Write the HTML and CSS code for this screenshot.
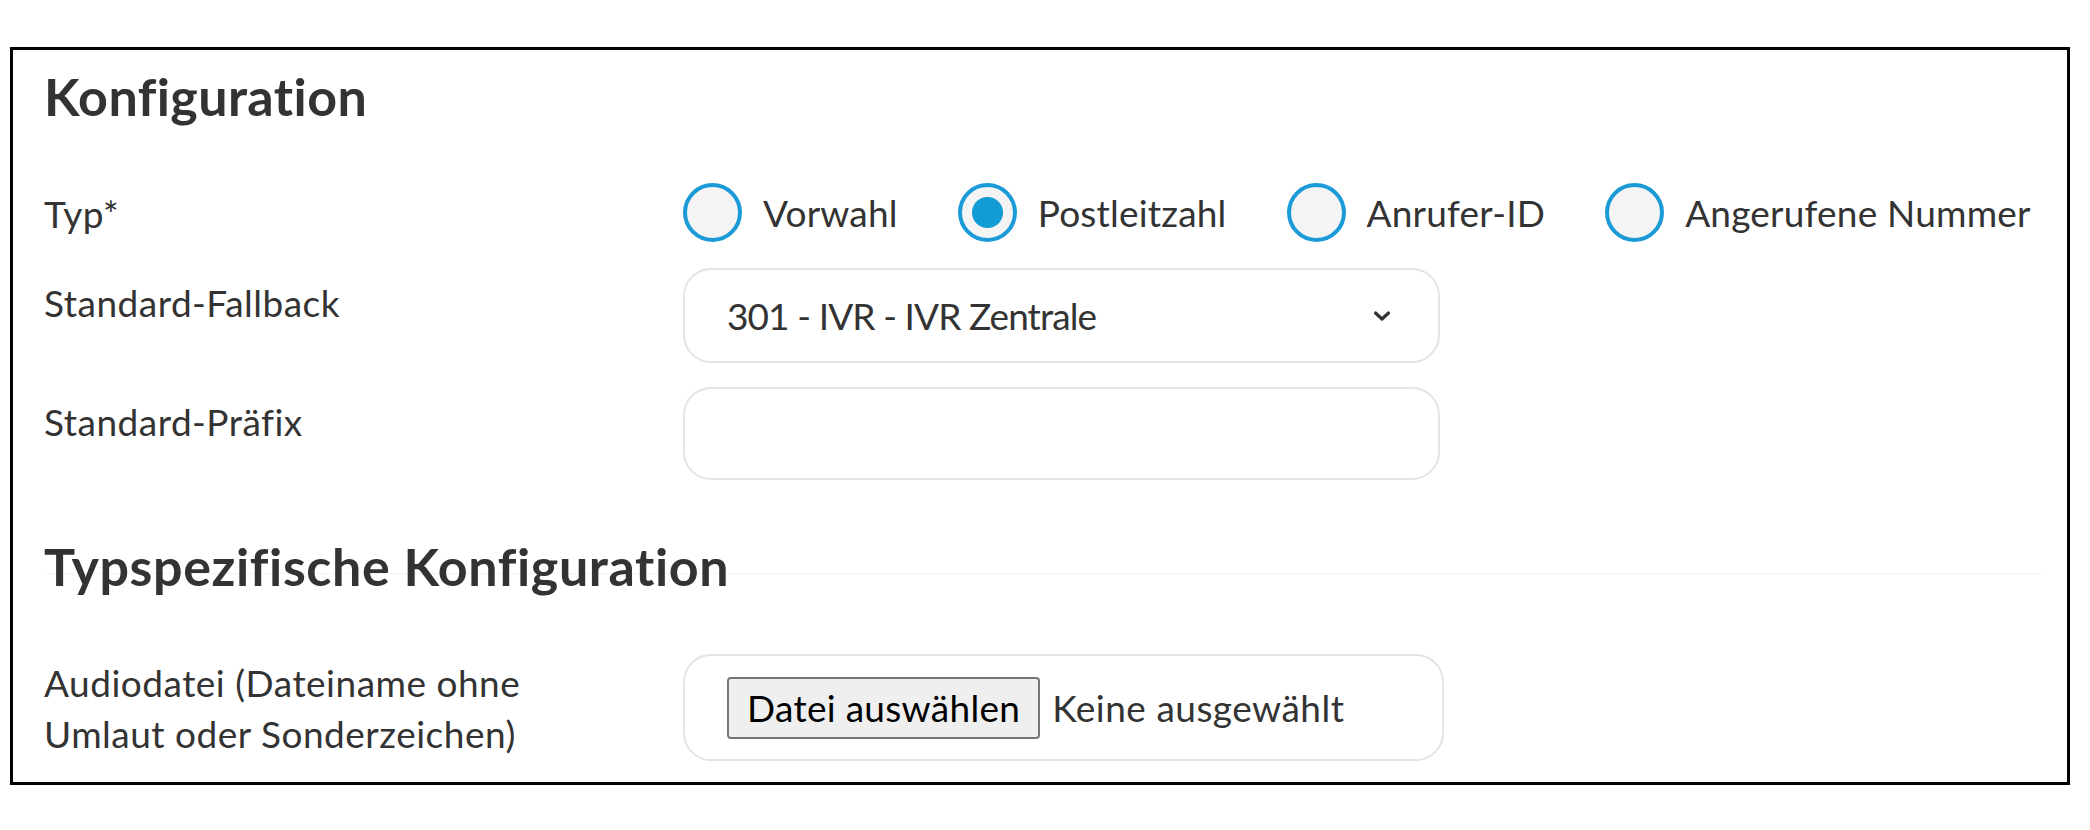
FILE: index.html
```html
<!DOCTYPE html>
<html lang="de">
<head>
<meta charset="utf-8">
<title>Konfiguration</title>
<link rel="stylesheet" href="styles.css">
</head>
<body>
<div class="panel">
  <h2 class="title">Konfiguration</h2>

  <div class="row row-type">
    <div class="label">Typ*</div>
    <div class="radios">
      <label class="radio"><input type="radio" name="typ"><span>Vorwahl</span></label>
      <label class="radio"><input type="radio" name="typ" checked><span>Postleitzahl</span></label>
      <label class="radio"><input type="radio" name="typ"><span>Anrufer-ID</span></label>
      <label class="radio"><input type="radio" name="typ"><span>Angerufene Nummer</span></label>
    </div>
  </div>

  <div class="row row-select">
    <div class="label">Standard-Fallback</div>
    <div class="select">
      <span class="select-value">301 - IVR - IVR Zentrale</span>
      <svg class="chevron" width="18" height="12" viewBox="0 0 18 12"><path d="M2.5 3 L9 9 L15.5 3" fill="none" stroke="#333" stroke-width="3.2" stroke-linecap="round" stroke-linejoin="round"/></svg>
    </div>
  </div>

  <div class="row row-input">
    <div class="label">Standard-Präfix</div>
    <div class="input"></div>
  </div>

  <h2 class="title title-sub">Typspezifische Konfiguration</h2>

  <div class="row row-file">
    <div class="label">Audiodatei (Dateiname ohne Umlaut oder Sonderzeichen)</div>
    <div class="file">
      <span class="file-btn">Datei auswählen</span>
      <span class="file-name">Keine ausgewählt</span>
    </div>
  </div>
</div>
</body>
</html>
```

FILE: styles.css
```css
html, body {
  background: #fff;
}

body {
  margin: 0;
  padding: 47px 0 0 10px;
  font-family: Lato, "Noto Sans", sans-serif;
  font-size: 37px;
  line-height: 51px;
  letter-spacing: 0.5px;
  color: #333;
}

.panel {
  width: 2060px;
  height: 738px;
  box-sizing: border-box;
  border: 3px solid #000;
  padding: 15px 26px 0 31px;
}

.title {
  margin: 0;
  font-family: Lato, "Noto Sans", sans-serif;
  font-weight: 700;
  font-size: 52px;
  line-height: 62px;
  letter-spacing: 0.4px;
  color: #333;
}

.title-sub {
  margin-top: 55px;
  letter-spacing: 0.6px;
  background: linear-gradient(#f4f4f4, #f4f4f4) no-repeat 0 38px / 100% 1px;
}

.row {
  display: grid;
  grid-template-columns: 639px 1fr;
  align-items: start;
}

.label {
  padding-top: 9px;
  padding-right: 80px;
}

.row-type {
  margin-top: 52px;
}

.radios {
  display: flex;
  align-items: center;
  gap: 60px;
  margin-top: 4px;
  white-space: nowrap;
}

.radio {
  display: flex;
  flex-shrink: 0;
  align-items: center;
  gap: 21px;
  letter-spacing: 0.2px;
}

.radio input {
  appearance: none;
  -webkit-appearance: none;
  flex-shrink: 0;
  width: 59px;
  height: 59px;
  margin: 0;
  box-sizing: border-box;
  border: 4px solid #1a9ad6;
  border-radius: 50%;
  background: #f4f4f4;
}

.radio input:checked {
  background: radial-gradient(circle, #139bd6 0 15px, #f4f4f4 16px);
}

.row-select {
  margin-top: 26px;
}

.select {
  width: 757px;
  height: 95px;
  box-sizing: border-box;
  border: 2px solid #e4e4e4;
  border-radius: 28px;
  background: #fff;
  padding: 0 47px 0 42px;
  display: flex;
  align-items: center;
  justify-content: space-between;
}

.select-value {
  letter-spacing: -0.9px;
}

.chevron {
  display: block;
}

.row-input {
  margin-top: 24px;
}

.input {
  width: 757px;
  height: 93px;
  box-sizing: border-box;
  border: 2px solid #e4e4e4;
  border-radius: 28px;
  background: #fff;
}

.row-file {
  margin-top: 57px;
}

.row-file .label {
  padding-top: 3px;
}

.file {
  width: 761px;
  height: 107px;
  box-sizing: border-box;
  border: 2px solid #e4e4e4;
  border-radius: 28px;
  padding-left: 42px;
  display: flex;
  align-items: center;
}

.file-btn {
  height: 62px;
  box-sizing: border-box;
  border: 2px solid #767676;
  border-radius: 4px;
  background: #efefef;
  color: #000;
  padding: 0 18px;
  display: flex;
  align-items: center;
  margin-right: 12px;
  letter-spacing: 0.3px;
}

.file-name {
  color: #333;
}
```
